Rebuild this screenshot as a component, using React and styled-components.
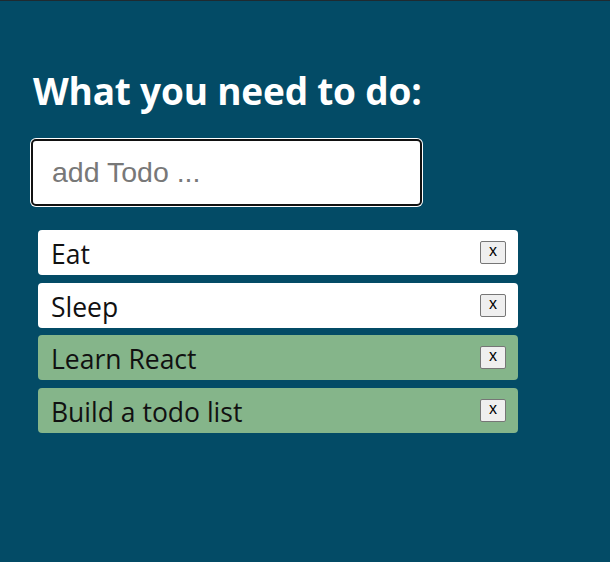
import React, { useState } from 'react';
import styled, { createGlobalStyle } from 'styled-components';

const GlobalStyle = createGlobalStyle`
  html, body {
    margin: 0;
    padding: 0;
    background-color: #034b66;
  }
  body {
    border-top: 1px solid #1f2a30;
    font-family: "Open Sans", "Noto Sans", sans-serif;
  }
`;

const Page = styled.div`
  min-height: 561px;
  padding: 60px 0 0 31px;
  box-sizing: border-box;
`;

const Title = styled.h1`
  margin: 0 0 0 2px;
  color: #fff;
  font-size: 37px;
  font-weight: 700;
  line-height: 60px;
  letter-spacing: -0.2px;
`;

const TodoInput = styled.input`
  display: block;
  margin: 18px 0 24px 0;
  width: 391px;
  height: 67px;
  box-sizing: border-box;
  padding: 0 19px;
  border: 2px solid #111;
  border-radius: 5px;
  box-shadow: 0 0 0 1px #fff;
  outline: none;
  font-family: "Liberation Sans", Arial, sans-serif;
  font-size: 28.5px;
  color: #222;
  caret-color: #000;

  &::placeholder {
    color: #787878;
  }
`;

const List = styled.ul`
  list-style: none;
  margin: 0 0 0 7px;
  padding: 0;
  width: 480px;
  display: flex;
  flex-direction: column;
  gap: 7.67px;
`;

const Item = styled.li`
  display: flex;
  align-items: center;
  justify-content: space-between;
  height: 45px;
  box-sizing: border-box;
  padding: 0 12px 0 13px;
  border-radius: 4px;
  background-color: ${(p) => (p.done ? '#85b58a' : '#fff')};
  color: #111;
  font-size: 26.5px;
`;

const ItemText = styled.span`
  padding-top: 3px;
`;

const RemoveButton = styled.button`
  width: 26px;
  height: 23px;
  padding: 0 0 3px;
  border: 1px solid #767676;
  border-radius: 2px;
  background-color: #efefef;
  color: #000;
  font-family: "Liberation Sans", Arial, sans-serif;
  font-size: 16px;
  line-height: 1;
  cursor: pointer;
`;

const initialTodos = [
  { id: 1, text: 'Eat', done: false },
  { id: 2, text: 'Sleep', done: false },
  { id: 3, text: 'Learn React', done: true },
  { id: 4, text: 'Build a todo list', done: true },
];

const App = () => {
  const [todos, setTodos] = useState(initialTodos);
  const [text, setText] = useState('');

  const handleKeyDown = (e) => {
    if (e.key === 'Enter' && text.trim()) {
      setTodos([...todos, { id: Date.now(), text: text.trim(), done: false }]);
      setText('');
    }
  };

  const toggle = (id) =>
    setTodos(todos.map((t) => (t.id === id ? { ...t, done: !t.done } : t)));

  const remove = (id) => setTodos(todos.filter((t) => t.id !== id));

  return (
    <>
      <GlobalStyle />
      <Page>
        <Title>What you need to do:</Title>
        <TodoInput
          placeholder="add Todo ..."
          value={text}
          onChange={(e) => setText(e.target.value)}
          onKeyDown={handleKeyDown}
          autoFocus
        />
        <List>
          {todos.map((t) => (
            <Item key={t.id} done={t.done} onClick={() => toggle(t.id)}>
              <ItemText>{t.text}</ItemText>
              <RemoveButton
                onClick={(e) => {
                  e.stopPropagation();
                  remove(t.id);
                }}
              >
                x
              </RemoveButton>
            </Item>
          ))}
        </List>
      </Page>
    </>
  );
};

export default App;
